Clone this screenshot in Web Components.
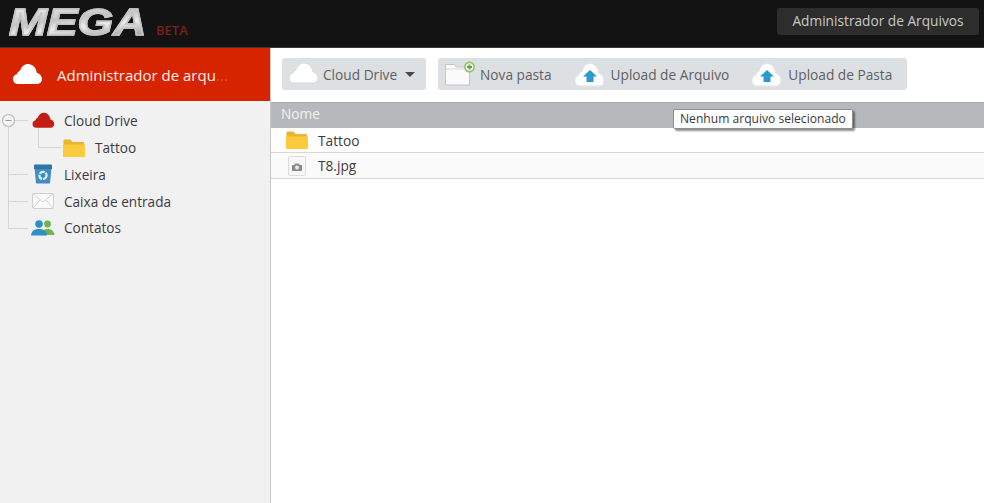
<!DOCTYPE html>
<html lang="pt">
<head>
<meta charset="utf-8">
<title>MEGA</title>
<style>
html, body { margin: 0; height: 100%; overflow: hidden; background: #fff; }
body { font-family: "Open Sans", "Noto Sans", sans-serif; }
mega-app { height: 503px; }
</style>
</head>
<body>
<mega-app></mega-app>
<script>
const CLOUD = 'M7 21C4 21 2 18.800 2 16C2 13.500 3.700 11.500 6 11C6.700 9.200 7.700 8.200 9 7.800C10.300 3.500 13.500 1 17 1C21.500 1 25.300 4.500 25.800 9.800C28.800 10.600 31 13.200 31 16.100C31 18.900 29 21 26.500 21Z';

const icons = {
    cloud(fill, w = 32, h = 24, stroke = 'none') {
        return `<svg width="${w}" height="${h}" viewBox="0 0 32 24"><path d="${CLOUD}" fill="${fill}" stroke="${stroke}"/></svg>`;
    },
    folder(w = 24, h = 20) {
        return `<svg width="${w}" height="${h}" viewBox="0 0 24 20">
            <path d="M1.500 2.500a1 1 0 0 1 1-1h6l2 2.400h10.500a1 1 0 0 1 1 1V7h-20.500Z" fill="#e9b52f"/>
            <path d="M1 6.500h22v11.500a1 1 0 0 1-1 1H2a1 1 0 0 1-1-1Z" fill="#fccb3c"/></svg>`;
    },
    trash() {
        return `<svg width="20" height="20" viewBox="0 0 20 20">
            <path d="M1.500 3.500h17l-1.400 15a1 1 0 0 1-1 1H3.900a1 1 0 0 1-1-1Z" fill="#3f8dc4"/>
            <path d="M1 1.500a1 1 0 0 1 1-1h16a1 1 0 0 1 1 1V5H1Z" fill="#2f75a8"/>
            <circle cx="10" cy="11.500" r="3.600" fill="none" stroke="#d9eefa" stroke-width="2.200" stroke-dasharray="5.500 .9"/></svg>`;
    },
    mail() {
        return `<svg width="22" height="16" viewBox="0 0 22 16">
            <rect x=".5" y=".5" width="21" height="15" rx="1" fill="#fafafa" stroke="#cfcfcf"/>
            <path d="M1 1l10 8 10-8M1 15l7-8M21 15l-7-8" fill="none" stroke="#d4d4d4"/></svg>`;
    },
    contacts() {
        return `<svg width="24" height="16" viewBox="0 0 24 16">
            <circle cx="16.500" cy="4" r="3.400" fill="#6fb34a"/>
            <path d="M11 15c0-4 2-6 5.500-6s6.500 2 7 6Z" fill="#6fb34a"/>
            <circle cx="8" cy="4" r="3.800" fill="#2b8fc9"/>
            <path d="M0 15.500c.5-4.500 3-6.500 8-6.500s7.500 2 8 6.500Z" fill="#2b8fc9"/></svg>`;
    },
    newFolder() {
        return `<svg width="31" height="26" viewBox="0 0 31 26">
            <path d="M.5 3.500h9l2 2.500h13v18H.5Z" fill="#fbfbfb" stroke="#c4c4c4"/>
            <path d="M.5 8h24" stroke="#d5d5d5"/>
            <circle cx="24.500" cy="6" r="5.500" fill="#8fc46b"/>
            <circle cx="24.500" cy="6" r="3.800" fill="#f2f8ec"/>
            <path d="M24.500 3.500v5M22 6h5" stroke="#63a63a" stroke-width="1.800"/></svg>`;
    },
    upload() {
        return `<svg width="30" height="26" viewBox="0 0 30 26">
            <path d="${CLOUD}" transform="translate(-2 1) scale(1 1.150)" fill="#fff" stroke="#e2e2e2"/>
            <path d="M15 9l7 6.500h-3.500V21h-7v-5.500H8Z" fill="#2b98d0"/></svg>`;
    },
    photo() {
        return `<svg width="18" height="20" viewBox="0 0 18 20">
            <rect x=".5" y=".5" width="17" height="19" rx="1" fill="#f7f7f7" stroke="#dcdcdc"/>
            <path d="M4 9h2.200l1-1.500h3.600l1 1.500H14v6H4Z" fill="#8c8c8c"/>
            <circle cx="9" cy="11.500" r="1.900" fill="#efefef"/></svg>`;
    }
};

class MegaLogo extends HTMLElement {
    constructor() {
        super();
        this.attachShadow({mode: 'open'}).innerHTML = `
        <style>
            :host { display: flex; align-items: flex-start; height: 47px; padding: 7px 0 0 9px; box-sizing: border-box; }
            .mark {
                width: 137px; height: 31px;
                font: italic 700 36px/31px "Liberation Sans", sans-serif;
                white-space: nowrap;
            }
            .mark span {
                display: inline-block; transform-origin: 0 50%; transform: scaleX(1.27);
                background: linear-gradient(172deg, #f0f0f0 0%, #c4c4c4 40%, #ececec 60%, #8e8e8e 100%);
                -webkit-background-clip: text; background-clip: text; color: transparent;
                -webkit-text-stroke: 1.400px #c4c4c4;
            }
            .beta { font: 600 13px/14px "Open Sans", sans-serif; color: #7c2018; margin: 16px 0 0 10px; }
        </style>
        <div class="mark"><span>MEGA</span></div>
        <div class="beta">BETA</div>`;
    }
}

class MegaHeader extends HTMLElement {
    constructor() {
        super();
        this.attachShadow({mode: 'open'}).innerHTML = `
        <style>
            :host {
                display: flex; justify-content: space-between; align-items: flex-start;
                height: 47px; background: #141313; border-bottom: 1px solid #3a3a3a; box-sizing: content-box;
            }
            .btn {
                margin: 8px 5px 0 0; height: 27px; width: 202px; border-radius: 3px; background: #2e2d2d;
                color: #c8c8c8; font-size: 13.700px; line-height: 26px; text-align: center;
            }
        </style>
        <mega-logo></mega-logo>
        <div class="btn"><slot></slot></div>`;
    }
}

class TreeItem extends HTMLElement {
    constructor() {
        super();
        const nested = this.hasAttribute('nested');
        this.attachShadow({mode: 'open'}).innerHTML = `
        <style>
            :host {
                display: flex; align-items: center; height: 26.750px;
                padding-left: ${nested ? 60 : 29}px; font-size: 13.600px; color: #3d3b40;
            }
            .ic { width: 28px; display: flex; justify-content: center; margin-right: 7px; }
        </style>
        <span class="ic"><slot name="icon"></slot></span>
        <slot></slot>`;
    }
}

class MegaSidebar extends HTMLElement {
    constructor() {
        super();
        this.attachShadow({mode: 'open'}).innerHTML = `
        <style>
            :host {
                display: flex; flex-direction: column; width: 270px; box-sizing: content-box;
                background: #f1f1f1; border-right: 1px solid #c9c9c9; flex: none;
            }
            .title {
                display: flex; align-items: center; gap: 14px; height: 53px; padding-left: 11px;
                background: #d62300; color: #fff1ea; font-size: 15px; flex: none; white-space: nowrap;
            }
            .title svg { display: block; }
            .tree { position: relative; padding-top: 6.500px; }
            .lines { position: absolute; left: 0; top: 0; }
        </style>
        <div class="title">${icons.cloud('#fff', 32, 24)}<span><slot name="title"></slot></span></div>
        <div class="tree">
            <svg class="lines" width="70" height="140" viewBox="0 0 70 140" fill="none">
                <path d="M8.500 26V127.500M15 19.500H28M38.500 27V46.500H61M8.500 73.500H28M8.500 100.500H28M8.500 127.500H28" stroke="#d6d6d6"/>
                <circle cx="8.500" cy="19.500" r="6" fill="#f4f4f4" stroke="#bdbdbd" stroke-width="1.200"/>
                <path d="M5.500 19.500h6" stroke="#9a9a9a"/>
            </svg>
            <slot></slot>
        </div>`;
    }
}

class ToolButton extends HTMLElement {
    constructor() {
        super();
        this.attachShadow({mode: 'open'}).innerHTML = `
        <style>
            :host { display: flex; align-items: center; gap: var(--gap, 6px); font-size: 13.700px; color: #5d6064; white-space: nowrap; }
        </style>
        <slot name="icon"></slot><slot></slot>`;
    }
}

class MegaToolbar extends HTMLElement {
    constructor() {
        super();
        this.attachShadow({mode: 'open'}).innerHTML = `
        <style>
            :host { display: flex; gap: 12px; height: 54px; padding: 10px 0 0 11px; box-sizing: border-box; flex: none; }
            .group {
                display: flex; align-items: center; height: 32px; background: #dde0e2; border-radius: 3px; box-sizing: border-box;
            }
            .one { width: 144px; padding-left: 5px; }
            .two { width: 469px; padding-left: 7px; gap: 23px; }
            .caret { width: 0; height: 0; border: 5px solid transparent; border-top-color: #45484b; border-bottom: 0; margin-left: 8px; }
        </style>
        <div class="group one"><slot name="drive"></slot><span class="caret"></span></div>
        <div class="group two"><slot></slot></div>`;
    }
}

class FileRow extends HTMLElement {
    constructor() {
        super();
        this.attachShadow({mode: 'open'}).innerHTML = `
        <style>
            :host {
                display: flex; align-items: center; height: 25.400px; box-sizing: border-box; padding-left: 14px; gap: 9px;
                font-size: 13.700px; color: #3d3b40; border-bottom: 1px solid #d9d9d9; background: var(--row, #fff);
            }
            .ic { width: 24px; display: flex; justify-content: center; }
        </style>
        <span class="ic"><slot name="icon"></slot></span><slot></slot>`;
    }
}

class FileList extends HTMLElement {
    constructor() {
        super();
        this.attachShadow({mode: 'open'}).innerHTML = `
        <style>
            :host { display: block; position: relative; flex: 1; }
            .head {
                height: 26px; line-height: 22px; padding-left: 10px; background: #b5b9bb; color: #f2f2f2;
                font-size: 13.700px; border-top: 1px solid #a9adaf; box-sizing: border-box;
            }
            .tip {
                position: absolute; left: 402px; top: 7px; height: 20px; padding: 0 6px; box-sizing: border-box;
                background: #fff; border: 1px solid #8f8f8f; border-radius: 2px; box-shadow: 2px 2px 2px rgba(0,0,0,.45);
                font-size: 12.100px; line-height: 18px; color: #3a3a3a; white-space: nowrap;
            }
        </style>
        <div class="head">Nome</div>
        <slot></slot>
        <div class="tip"><slot name="tip"></slot></div>`;
    }
}

class MegaApp extends HTMLElement {
    constructor() {
        super();
        this.attachShadow({mode: 'open'}).innerHTML = `
        <style>
            :host { display: flex; flex-direction: column; width: 984px; }
            .body { display: flex; flex: 1; min-height: 0; }
            .main { display: flex; flex-direction: column; flex: 1; min-width: 0; }
            [slot=icon] { display: flex; }
            .fade { opacity: .22; }
        </style>
        <mega-header>Administrador de Arquivos</mega-header>
        <div class="body">
            <mega-sidebar>
                <span slot="title">Administrador de arqu<span class="fade">...</span></span>
                <tree-item><span slot="icon">${icons.cloud('#c41d16', 24, 18)}</span>Cloud Drive</tree-item>
                <tree-item nested><span slot="icon">${icons.folder()}</span>Tattoo</tree-item>
                <tree-item><span slot="icon">${icons.trash()}</span>Lixeira</tree-item>
                <tree-item><span slot="icon">${icons.mail()}</span>Caixa de entrada</tree-item>
                <tree-item><span slot="icon">${icons.contacts()}</span>Contatos</tree-item>
            </mega-sidebar>
            <div class="main">
                <mega-toolbar>
                    <tool-button slot="drive" style="--gap:4px"><span slot="icon">${icons.cloud('#fff', 32, 24, '#d8d8d8')}</span>Cloud Drive</tool-button>
                    <tool-button style="--gap:4px"><span slot="icon">${icons.newFolder()}</span>Nova pasta</tool-button>
                    <tool-button><span slot="icon">${icons.upload()}</span>Upload de Arquivo</tool-button>
                    <tool-button><span slot="icon">${icons.upload()}</span>Upload de Pasta</tool-button>
                </mega-toolbar>
                <file-list>
                    <file-row><span slot="icon">${icons.folder()}</span>Tattoo</file-row>
                    <file-row style="--row:#fafafa"><span slot="icon">${icons.photo()}</span>T8.jpg</file-row>
                    <span slot="tip">Nenhum arquivo selecionado</span>
                </file-list>
            </div>
        </div>`;
    }
}

customElements.define('mega-logo', MegaLogo);
customElements.define('mega-header', MegaHeader);
customElements.define('tree-item', TreeItem);
customElements.define('mega-sidebar', MegaSidebar);
customElements.define('tool-button', ToolButton);
customElements.define('mega-toolbar', MegaToolbar);
customElements.define('file-row', FileRow);
customElements.define('file-list', FileList);
customElements.define('mega-app', MegaApp);
</script>
</body>
</html>
